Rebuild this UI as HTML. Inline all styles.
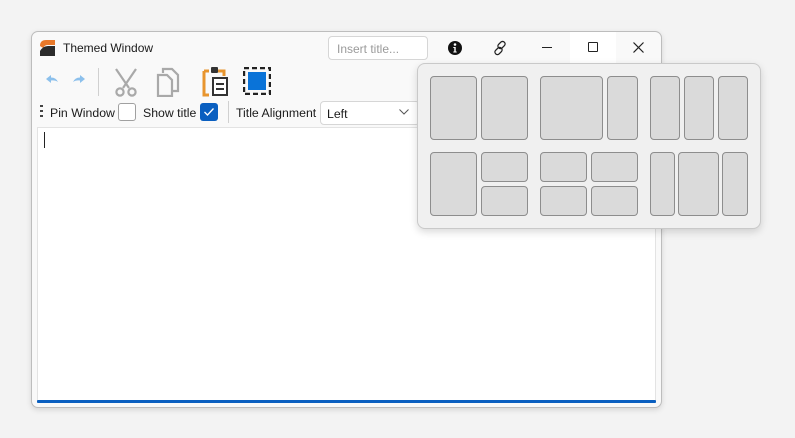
<!DOCTYPE html>
<html><head><meta charset="utf-8"><style>
*{box-sizing:border-box;margin:0;padding:0}
body{width:795px;height:438px;background:#f3f3f3;position:relative;overflow:hidden;font-family:"Liberation Sans",sans-serif;font-size:12.3px;color:#1a1a1a}
.win{position:absolute;left:31px;top:31px;width:631px;height:377px;background:#f9f9f9;border:1px solid #bdbdbd;border-radius:7px;box-shadow:0 2px 6px rgba(0,0,0,.12)}
.a{position:absolute}
.edit{position:absolute;left:5px;top:95px;width:619px;height:276px;background:#fff;border:1px solid #e3e3e3;border-bottom:none}
.blue{position:absolute;left:5px;top:368px;width:619px;height:3px;background:#0a5fc0;border-radius:1px}
.fly{position:absolute;left:417px;top:63px;width:344px;height:166px;background:#f0f0f0;border:1px solid #c9c9c9;border-radius:8px;box-shadow:0 3px 8px rgba(0,0,0,.15)}
.t{position:absolute;background:#dadada;border:1.5px solid #8d8d8d;border-radius:4px}
</style></head><body>
<div class="win">
  <svg class="a" style="left:8px;top:8px" width="16" height="16"><path d="M0 6 Q0 0 6 0 L15 0 L15 5 L7 5 Q5 5 3 8 Z" fill="#e8782a"/><path d="M0 16 L0 11 Q3 6 8 6 L15 6 L15 16 Z" fill="#2b2b2b"/></svg>
  <div class="a" style="left:31px;top:9px;font-size:12px">Themed Window</div>
  <div class="a" style="left:296px;top:4px;width:100px;height:24px;background:#fff;border:1px solid #d6d6d6;border-radius:4px;color:#9a9a9a;padding:5px 8px;font-size:12px">Insert title...</div>
  <svg class="a" style="left:415px;top:8px" width="16" height="16"><circle cx="8" cy="8" r="7" fill="#111"/><circle cx="8" cy="4.5" r="1.3" fill="#fff"/><path d="M6.3 7h2.4v4.5h1v1H6.3v-1h1V8h-1z" fill="#fff"/></svg>
  <svg class="a" style="left:460px;top:8px" width="16" height="16" fill="none" stroke="#222" stroke-width="1.3"><rect x="7" y="1" width="5" height="8" rx="2.5" transform="rotate(45 9.5 5)"/><rect x="4" y="7" width="5" height="8" rx="2.5" transform="rotate(45 6.5 11)"/></svg>
  <div class="a" style="left:510px;top:15px;width:10px;height:1.3px;background:#222"></div>
  <div class="a" style="left:538px;top:0;width:46px;height:32px;background:#fff"></div>
  <div class="a" style="left:556px;top:10px;width:10px;height:10px;border:1.2px solid #222;border-radius:1px"></div>
  <svg class="a" style="left:601px;top:10px" width="11" height="11" stroke="#222" stroke-width="1.2"><path d="M0.5 0.5L10.5 10.5M10.5 0.5L0.5 10.5"/></svg>

  <svg class="a" style="left:13px;top:42px" width="14" height="10"><path d="M1 5 L6 1 L6 3.5 Q11 3.5 13 8 Q10 6 6 6.5 L6 9 Z" fill="#8cc0ec"/></svg>
  <svg class="a" style="left:40px;top:42px" width="14" height="10"><path d="M13 5 L8 1 L8 3.5 Q3 3.5 1 8 Q4 6 8 6.5 L8 9 Z" fill="#8cc0ec"/></svg>
  <div class="a" style="left:66px;top:36px;width:1px;height:28px;background:#d0d0d0"></div>
  <svg class="a" style="left:80px;top:35px" width="28" height="30" fill="none" stroke="#a9a9a9" stroke-width="2.2"><path d="M4 2 L17 21 M24 2 L11 21"/><circle cx="8" cy="25" r="3.6"/><circle cx="20" cy="25" r="3.6"/></svg>
  <svg class="a" style="left:124px;top:35px" width="26" height="30" fill="none" stroke="#a9a9a9" stroke-width="2.2"><path d="M7 6 V2 H16 L22 8 V24 H16"/><path d="M2 8 H11 L16 13 V29 H2 Z"/></svg>
  <svg class="a" style="left:170px;top:33px" width="28" height="32"><path d="M2 6 H7 M2 6 V30 H7" stroke="#e8952e" stroke-width="3" fill="none"/><path d="M16 6 H22 V11" stroke="#e8952e" stroke-width="3" fill="none"/><rect x="9" y="2" width="7" height="6" rx="1" fill="#333"/><rect x="11" y="13" width="14" height="17" fill="#fff" stroke="#333" stroke-width="2"/><path d="M14 19 H22 M14 24 H22" stroke="#333" stroke-width="2"/></svg>
  <svg class="a" style="left:211px;top:35px" width="28" height="28"><rect x="1" y="1" width="26" height="26" fill="none" stroke="#222" stroke-width="2.4" stroke-dasharray="5 3"/><rect x="5" y="5" width="18" height="18" fill="#0a73d8"/></svg>

  <div class="a" style="left:8px;top:73px;width:3px;height:15px;background:repeating-linear-gradient(#444 0 2px,transparent 2px 5px)"></div>
  <div class="a" style="left:18px;top:74px">Pin Window</div>
  <div class="a" style="left:86px;top:71px;width:18px;height:18px;background:#fff;border:1px solid #a0a0a0;border-radius:3px"></div>
  <div class="a" style="left:111px;top:74px">Show title</div>
  <div class="a" style="left:168px;top:71px;width:18px;height:18px;background:#0a5fc0;border-radius:3px"></div>
  <svg class="a" style="left:171px;top:75px" width="12" height="10"><path d="M1.5 5 L4.5 8 L10.5 1.5" stroke="#fff" stroke-width="1.3" fill="none"/></svg>
  <div class="a" style="left:196px;top:69px;width:1px;height:22px;background:#d0d0d0"></div>
  <div class="a" style="left:204px;top:74px">Title Alignment</div>
  <div class="a" style="left:288px;top:69px;width:100px;height:24px;background:#fff;border:1px solid #d6d6d6;border-radius:4px;padding:5px 6px">Left</div>
  <svg class="a" style="left:367px;top:77px" width="10" height="6"><path d="M0.5 0.5 L5 5 L9.5 0.5" stroke="#555" fill="none"/></svg>

  <div class="edit"></div>
  <div class="a" style="left:12px;top:100px;width:1px;height:16px;background:#222"></div>
  <div class="blue"></div>
</div>
<div class="fly">
  <div class="t" style="left:12px;top:12px;width:47px;height:64px"></div>
  <div class="t" style="left:63px;top:12px;width:47px;height:64px"></div>
  <div class="t" style="left:122px;top:12px;width:63px;height:64px"></div>
  <div class="t" style="left:189px;top:12px;width:31px;height:64px"></div>
  <div class="t" style="left:232px;top:12px;width:30px;height:64px"></div>
  <div class="t" style="left:266px;top:12px;width:30px;height:64px"></div>
  <div class="t" style="left:300px;top:12px;width:30px;height:64px"></div>

  <div class="t" style="left:12px;top:88px;width:47px;height:64px"></div>
  <div class="t" style="left:63px;top:88px;width:47px;height:30px"></div>
  <div class="t" style="left:63px;top:122px;width:47px;height:30px"></div>
  <div class="t" style="left:122px;top:88px;width:47px;height:30px"></div>
  <div class="t" style="left:173px;top:88px;width:47px;height:30px"></div>
  <div class="t" style="left:122px;top:122px;width:47px;height:30px"></div>
  <div class="t" style="left:173px;top:122px;width:47px;height:30px"></div>
  <div class="t" style="left:232px;top:88px;width:25px;height:64px"></div>
  <div class="t" style="left:260px;top:88px;width:41px;height:64px"></div>
  <div class="t" style="left:304px;top:88px;width:26px;height:64px"></div>
</div>
</body></html>
